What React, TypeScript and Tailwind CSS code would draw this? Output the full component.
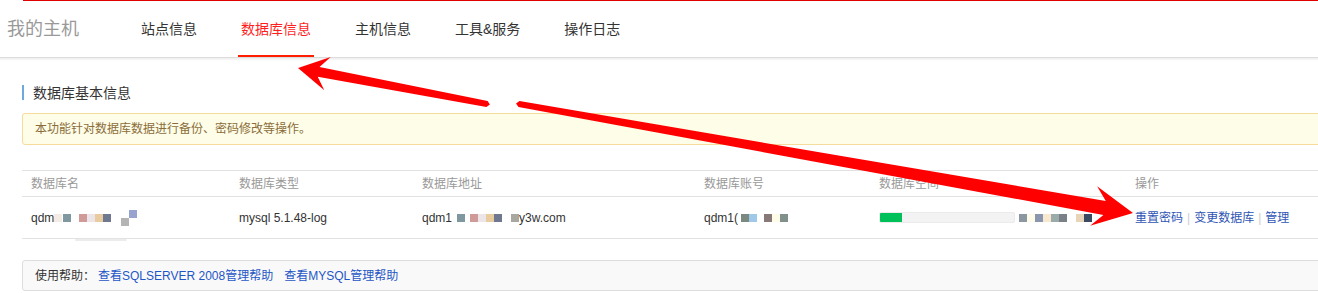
import React from "react";

const Sq = ({ c, className = "" }: { c: string; className?: string }) => (
  <span className={`inline-block w-[8px] h-[8px] align-middle ${className}`} style={{ backgroundColor: c }} />
);

const tabs = ["站点信息", "数据库信息", "主机信息", "工具&服务", "操作日志"];

export default function App() {
  return (
    <div className="relative w-[1318px] h-[293px] overflow-hidden bg-white text-[#333] font-['Liberation_Sans','Noto_Sans_CJK_SC',sans-serif]">
      {/* header */}
      <div className="flex flex-col border-b border-[#dcdcdc]">
        <div className="h-px ml-[23px] bg-[#e00000]" />
        <div className="h-[56px] flex items-stretch">
          <div className="flex items-center pl-[7px] w-[138px] text-[18px] text-[#999] leading-none">我的主机</div>
          <div className="flex gap-[38px]">
            {tabs.map((t, i) => (
              <div
                key={t}
                className={
                  i === 1
                    ? "flex items-center px-[3px] text-[14px] text-[#ff1e1e] border-b-2 border-[#ff1e00] pt-[2px]"
                    : "flex items-center px-[3px] text-[14px] text-[#333] border-b-2 border-transparent pt-[2px]"
                }
              >
                {t}
              </div>
            ))}
          </div>
        </div>
      </div>
      <div className="h-[3px] bg-gradient-to-b from-[#ededed] to-white" />

      {/* content */}
      <div className="pl-[22px] pt-[24px] w-[1340px]">
        <div className="h-[15px] border-l-2 border-[#6fa8dc] pl-[9px] flex items-center text-[14px] text-[#333] leading-none">
          数据库基本信息
        </div>

        <div className="mt-[13px] h-[32px] border border-[#f5dc9c] bg-[#fefde7] rounded-[3px] pl-[12px] flex items-center text-[12px] text-[#8a6d3b]">
          本功能针对数据库数据进行备份、密码修改等操作。
        </div>

        {/* table */}
        <div className="mt-[25px] border-t border-b border-[#e2e2e2] text-[12px]">
          <div className="grid grid-cols-[208px_183px_282px_175px_256px_1fr] h-[26px] items-center border-b border-[#e2e2e2] text-[#999]">
            <div className="pl-[9px]">数据库名</div>
            <div className="pl-[9px]">数据库类型</div>
            <div className="pl-[9px]">数据库地址</div>
            <div className="pl-[9px]">数据库账号</div>
            <div className="pl-[9px]">数据库空间</div>
            <div className="pl-[9px]">操作</div>
          </div>
          <div className="grid grid-cols-[208px_183px_282px_175px_256px_1fr] h-[41px] items-center text-[#333]">
            <div className="pl-[9px] flex items-center relative">
              <span>qdm</span>
              <Sq c="#f3ece4" className="w-[3px]" />
              <Sq c="#7f98a0" className="ml-[1px]" />
              <Sq c="#d09a98" className="ml-[8px]" />
              <Sq c="#ece6ea" />
              <Sq c="#e8cca0" />
              <Sq c="#6e7890" />
              <span className="ml-[10px] flex flex-col">
                <span className="flex">
                  <span className="w-[8px] h-[8px]" />
                  <Sq c="#98a4d0" />
                </span>
                <Sq c="#b4b4b4" />
              </span>
              <span className="absolute left-[53px] top-[30px] w-[52px] h-[2px] bg-[#ececec] rounded-full" />
            </div>
            <div className="pl-[9px]">mysql 5.1.48-log</div>
            <div className="pl-[9px] flex items-center">
              <span>qdm1</span>
              <Sq c="#7f98a0" className="ml-[5px]" />
              <Sq c="#d09a98" className="ml-[5px]" />
              <Sq c="#ece6ea" />
              <Sq c="#e8cca0" />
              <Sq c="#6e7890" />
              <Sq c="#a8a8a0" className="ml-[9px]" />
              <span>y3w.com</span>
            </div>
            <div className="pl-[9px] flex items-center">
              <span>qdm1(</span>
              <Sq c="#7a8a80" className="ml-[3px]" />
              <Sq c="#a0c8e8" />
              <Sq c="#887878" className="ml-[7px]" />
              <Sq c="#fefbe8" />
              <Sq c="#80908a" />
            </div>
            <div className="pl-[9px] flex items-center">
              <div className="w-[136px] h-[11px] rounded-[2px] bg-[#f3f3f3] border border-[#ebebeb] overflow-hidden">
                <div className="w-[22px] h-full bg-[#00c05a]" />
              </div>
              <Sq c="#8a96a0" className="ml-[4px]" />
              <Sq c="#fefbe8" />
              <Sq c="#8a96b0" />
              <Sq c="#f8e8d0" />
              <Sq c="#9aacaa" />
              <Sq c="#7a8088" />
              <Sq c="#e8d4b8" className="ml-[9px]" />
              <Sq c="#3a4a60" />
            </div>
            <div className="pl-[9px] flex items-center text-[#2f55b5]">
              <span>重置密码</span>
              <span className="mx-[4px] text-[#ccc]">|</span>
              <span>变更数据库</span>
              <span className="mx-[4px] text-[#ccc]">|</span>
              <span>管理</span>
            </div>
          </div>
        </div>

        {/* help */}
        <div className="mt-[21px] h-[31px] border border-[#dddddd] bg-[#f9f9f9] rounded-[3px] pl-[12px] flex items-center text-[12px]">
          <span className="text-[#333]">使用帮助：</span>
          <span className="ml-[3px] text-[#1f56c6]">查看SQLSERVER 2008管理帮助</span>
          <span className="ml-[11px] text-[#1f56c6]">查看MYSQL管理帮助</span>
        </div>
      </div>

      {/* annotation arrows */}
      <svg className="absolute inset-0 pointer-events-none" width="1318" height="293" viewBox="0 0 1318 293">
        <polygon
          fill="#ff0000"
          points="298,68 330.7,56.9 319.5,67 487.6,101.1 489.9,104.6 486.4,106.9 317.7,76.8 324.3,90.3"
        />
        <polygon
          fill="#ff0000"
          points="1133,213 1097.1,186.3 1105.8,201.1 519.5,101 516,103.5 518.5,107 1103.4,214.9 1090.1,225.7"
        />
      </svg>
    </div>
  );
}
